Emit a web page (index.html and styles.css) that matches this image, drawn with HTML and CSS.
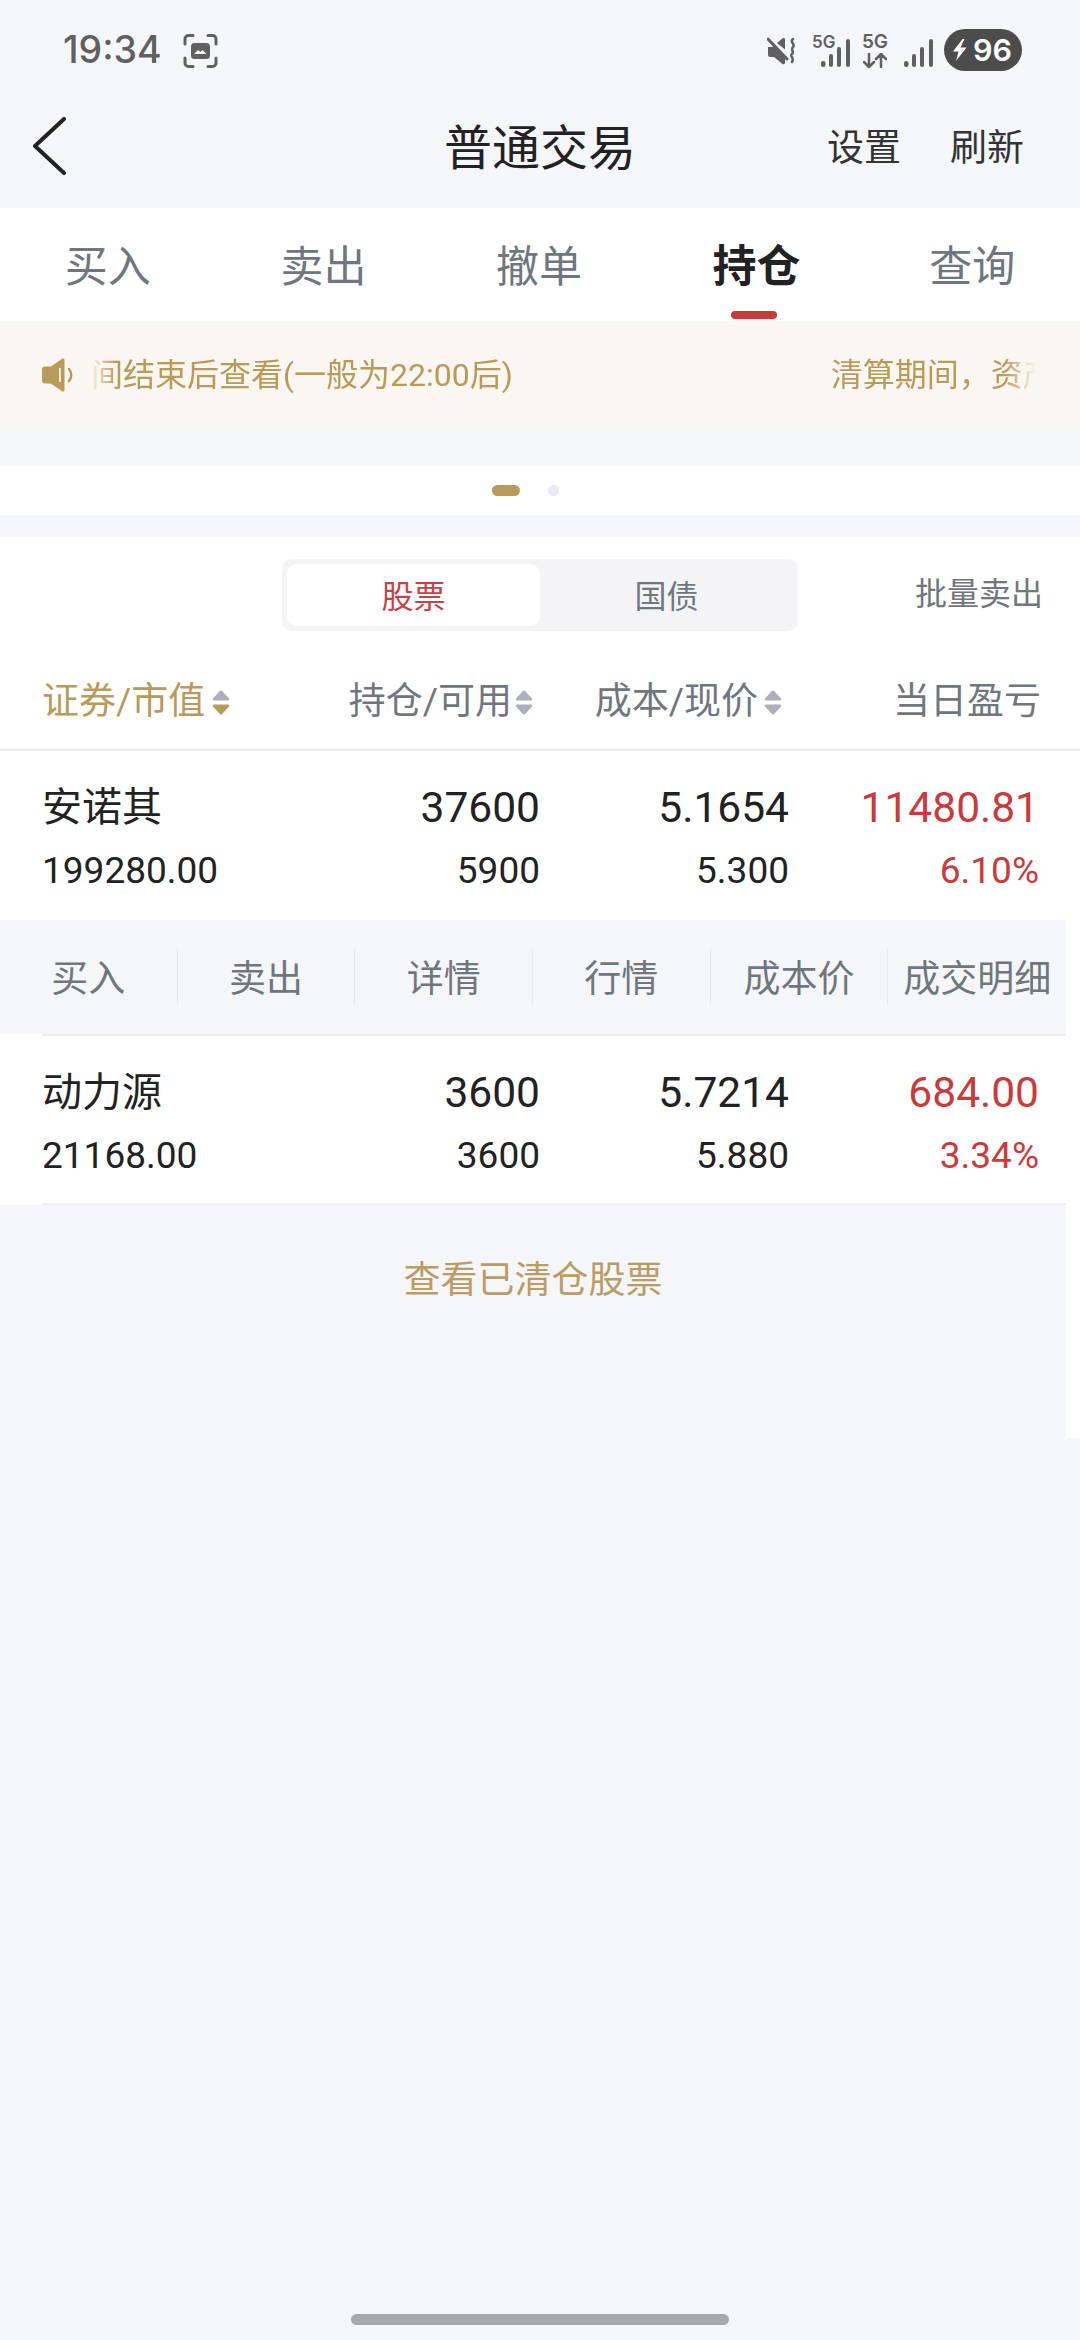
FILE: index.html
```html
<!DOCTYPE html>
<html lang="zh-CN">
<head>
<meta charset="utf-8">
<title>普通交易</title>
<link rel="stylesheet" href="styles.css">
</head>
<body>
<div class="page">
  <div class="status">
    <div class="status-left">
      <span class="time">19:34</span>
      <svg class="shot" width="35" height="34" viewBox="0 0 35 34" fill="none" stroke="#606060" stroke-width="3" stroke-linecap="round"><path d="M2 10V5a3.500 3.500 0 0 1 3.500-3.500H10M25 1.500h4.500A3.500 3.500 0 0 1 33 5v5M33 24v5a3.500 3.500 0 0 1-3.500 3.500H25M10 32.500H5.500A3.500 3.500 0 0 1 2 29v-5"/><rect x="8" y="9" width="19" height="16" rx="3.500" fill="#606060" stroke="none"/><path d="M11 20l4-4 2.500 2 2-2 4 4z" fill="#f5f6fa" stroke="none"/></svg>
    </div>
    <div class="status-right">
      <svg class="mute" width="29" height="28" viewBox="0 0 29 28"><path d="M1 10h4l2-1 11 11v6.500l-2 1L7 20H3a2 2 0 0 1-2-2z" fill="#606060"/><path d="M10 6l6-5 2 .5v11z" fill="#606060"/><path d="M1 2l19 20" stroke="#606060" stroke-width="3" stroke-linecap="round"/><path d="M26 2c-4 3 3 5 0 8s2 5-1 7 3 4 0 8" fill="none" stroke="#606060" stroke-width="2.500" stroke-linecap="round"/></svg>
      <div class="net net-a">
        <span class="net-label">5G</span>
        <svg width="29" height="28" viewBox="0 0 29 28" fill="#606060"><rect x="0" y="22" width="4.500" height="6" rx="2.200"/><rect x="8" y="15" width="4" height="13" rx="2"/><rect x="16" y="8" width="4" height="20" rx="2"/><rect x="25" y="0" width="4" height="28" rx="2"/></svg>
      </div>
      <div class="net-b">
        <span class="net-label net-label-lg">5G</span>
        <svg width="24" height="15" viewBox="0 0 24 15" fill="none" stroke="#606060" stroke-width="2.500" stroke-linecap="round" stroke-linejoin="round"><path d="M6 1v13M1 9l5 5 5-5M18 14V1M13 6l5-5 5 5"/></svg>
      </div>
      <svg class="sig2" width="29" height="28" viewBox="0 0 29 28" fill="#606060"><rect x="0" y="22" width="4.500" height="6" rx="2.200"/><rect x="8" y="15" width="4" height="13" rx="2"/><rect x="16" y="8" width="4" height="20" rx="2"/><rect x="25" y="0" width="4" height="28" rx="2"/></svg>
      <div class="battery">
        <svg width="14" height="22" viewBox="0 0 14 22" fill="#fff"><path d="M9.500 0L0 12.500h5.500L3 22l10.500-13.500H7.500L11.500 0z"/></svg>
        <span class="batt-num">96</span>
      </div>
    </div>
  </div>

  <header class="nav">
    <svg class="back" width="34" height="58" viewBox="0 0 34 58" fill="none" stroke="#222" stroke-width="4" stroke-linecap="round" stroke-linejoin="round"><path d="M32 2L3 29l29 27"/></svg>
    <h1 class="title">普通交易</h1>
    <div class="nav-actions"><span>设置</span><span>刷新</span></div>
  </header>

  <nav class="tabs">
    <span class="tab">买入</span>
    <span class="tab">卖出</span>
    <span class="tab">撤单</span>
    <span class="tab tab-active">持仓</span>
    <span class="tab">查询</span>
  </nav>

  <div class="notice">
    <svg class="speaker" width="31" height="34" viewBox="0 0 31 34"><path d="M3 8.500h6L20 .8c1.500-.8 2.500 0 2.500 1.500v29.400c0 1.500-1 2.300-2.500 1.500L9 25.500H3a3 3 0 0 1-3-3v-11a3 3 0 0 1 3-3z" fill="#b99a59"/><rect x="17" y="10" width="1.800" height="14" fill="#faf6f1"/><path d="M27 11c3 3.500 3 8.500 0 12" fill="none" stroke="#b99a59" stroke-width="2.500" stroke-linecap="round"/></svg>
    <div class="marquee">
      <div class="marquee-track">
        <span>间结束后查看(一般为22:00后)</span>
        <span>清算期间，资产数据可能不准确</span>
      </div>
    </div>
  </div>

  <div class="gap-notice"></div>
  <div class="pager"><i class="dot dot-on"></i><i class="dot"></i></div>
  <div class="gap-pager"></div>

  <section class="panel">
    <div class="seg-row">
      <div class="seg">
        <span class="seg-item seg-on">股票</span>
        <span class="seg-item">国债</span>
      </div>
      <span class="batch">批量卖出</span>
    </div>

    <div class="thead">
      <div class="th th-gold"><span>证券/市值</span>
        <svg class="sort" width="18" height="25" viewBox="0 0 18 25"><path d="M9 .5c.6 0 1 .3 1.400.7L17 8.500c.6.800.2 2-1 2H2c-1.200 0-1.600-1.200-1-2l6.600-7.300C8 .8 8.400.5 9 .5z" fill="#adb0b9"/><path d="M9 24.500c.6 0 1-.3 1.400-.7L17 16.500c.6-.8.200-2-1-2H2c-1.200 0-1.600 1.200-1 2l6.600 7.300c.4.400.8.700 1.400.7z" fill="#b99a59"/></svg>
      </div>
      <div class="th th-r th-tight"><span>持仓/可用</span>
        <svg class="sort" width="18" height="25" viewBox="0 0 18 25" fill="#adb0b9"><path d="M9 .5c.6 0 1 .3 1.400.7L17 8.500c.6.800.2 2-1 2H2c-1.200 0-1.600-1.200-1-2l6.600-7.300C8 .8 8.400.5 9 .5z"/><path d="M9 24.500c.6 0 1-.3 1.400-.7L17 16.500c.6-.8.200-2-1-2H2c-1.200 0-1.600 1.200-1 2l6.600 7.300c.4.400.8.700 1.400.7z"/></svg>
      </div>
      <div class="th th-r"><span>成本/现价</span>
        <svg class="sort" width="18" height="25" viewBox="0 0 18 25" fill="#adb0b9"><path d="M9 .5c.6 0 1 .3 1.400.7L17 8.500c.6.800.2 2-1 2H2c-1.200 0-1.600-1.200-1-2l6.600-7.300C8 .8 8.400.5 9 .5z"/><path d="M9 24.500c.6 0 1-.3 1.400-.7L17 16.500c.6-.8.200-2-1-2H2c-1.200 0-1.600 1.200-1 2l6.600 7.300c.4.400.8.700 1.400.7z"/></svg>
      </div>
      <div class="th th-end"><span>当日盈亏</span></div>
    </div>

    <div class="row">
      <span class="name">安诺其</span><span class="big">37600</span><span class="big">5.1654</span><span class="big red">11480.81</span>
      <span class="small left">199280.00</span><span class="small">5900</span><span class="small">5.300</span><span class="small red">6.10%</span>
    </div>

    <div class="lower">
      <div class="actions">
        <span class="act">买入</span><span class="act">卖出</span><span class="act">详情</span><span class="act">行情</span><span class="act">成本价</span><span class="act">成交明细</span>
      </div>
      <div class="row-wrap">
        <div class="row row-inset">
          <span class="name">动力源</span><span class="big">3600</span><span class="big">5.7214</span><span class="big red">684.00</span>
          <span class="small left">21168.00</span><span class="small">3600</span><span class="small">5.880</span><span class="small red">3.34%</span>
        </div>
      </div>
      <div class="more">查看已清仓股票</div>
    </div>
  </section>

  <div class="home-bar"></div>
</div>
</body>
</html>
```

FILE: styles.css
```css
* { box-sizing: border-box; }
html, body { margin: 0; padding: 0; }
body {
  width: 1080px;
  height: 2340px;
  overflow: hidden;
  background: #f5f6fa;
  font-family: Roboto, "Noto Sans CJK SC", sans-serif;
  color: #222;
}
.page {
  position: relative;
  width: 1080px;
  height: 2340px;
  display: flex;
  flex-direction: column;
  background: #f5f6fa;
}

/* status bar */
.status {
  height: 100px;
  padding: 29px 58px 0 63px;
  display: flex;
  justify-content: space-between;
  align-items: flex-start;
  flex: none;
}
.status-left { display: flex; align-items: center; gap: 21px; height: 42px; }
.time {
  font-family: Inter, sans-serif;
  font-weight: 500;
  font-size: 37.5px;
  line-height: 42px;
  color: #606060;
}
.shot { margin-top: 1px; }
.status-right { display: flex; align-items: flex-start; height: 42px; }
.mute { margin: 8px 0 0 0; }
.net { position: relative; width: 38px; height: 42px; margin-left: 16px; display: flex; justify-content: flex-end; }
.net svg { margin-top: 10px; }
.net-label {
  font-family: Inter, sans-serif;
  font-weight: 600;
  font-size: 17px;
  line-height: 14px;
  color: #606060;
}
.net-label-lg { font-size: 19px; }
.net-a .net-label { position: absolute; left: 0; top: 6px; }
.net-b { width: 24px; margin-left: 13px; display: flex; flex-direction: column; align-items: center; padding-top: 6px; gap: 4px; }
.sig2 { margin: 10px 0 0 17px; }
.battery {
  width: 78px;
  height: 42px;
  margin-left: 11px;
  border-radius: 21px;
  background: #4c4c4c;
  display: flex;
  align-items: center;
  padding-left: 9px;
  gap: 6px;
}
.batt-num {
  font-family: Inter, sans-serif;
  font-weight: 600;
  font-size: 30.5px;
  line-height: 42px;
  color: #fff;
}

/* nav */
.nav {
  height: 108px;
  flex: none;
  position: relative;
  display: flex;
  align-items: center;
  justify-content: center;
  padding-bottom: 10px;
}
.back { position: absolute; left: 32px; top: 17px; }
.title { margin: 0; font-size: 48px; font-weight: 400; line-height: 60px; color: #222; }
.nav-actions {
  position: absolute;
  right: 56px;
  top: 24px;
  display: flex;
  gap: 49px;
  font-size: 37px;
  line-height: 50px;
  color: #333;
}

/* tabs */
.tabs { height: 113px; flex: none; display: flex; background: #fff; }
.tab {
  position: relative;
  flex: 1;
  display: flex;
  justify-content: center;
  padding-top: 29px;
  font-size: 43px;
  line-height: 60px;
  color: #70767e;
}
.tab-active { color: #222; font-weight: 700; font-size: 44px; padding-left: 2px; }
.tab-active::after {
  content: "";
  position: absolute;
  left: 84px;
  bottom: 2px;
  width: 46px;
  height: 8px;
  border-radius: 4px;
  background: #ca3a3a;
}

/* notice */
.notice {
  height: 108px;
  flex: none;
  background: #faf6f1;
  display: flex;
  align-items: center;
  padding-left: 42px;
}
.speaker { flex: none; }
.marquee {
  width: 946px;
  margin-left: 17px;
  overflow: hidden;
  -webkit-mask-image: linear-gradient(90deg, transparent 0, #000 26px, #000 915px, transparent 946px);
  mask-image: linear-gradient(90deg, transparent 0, #000 26px, #000 915px, transparent 946px);
}
.marquee-track {
  display: flex;
  gap: 318px;
  white-space: nowrap;
  font-size: 32px;
  line-height: 46px;
  color: #b99a59;
  margin-left: 1px;
}

.gap-notice { height: 37px; flex: none; background: #f6f7f8; }
.pager {
  height: 49px;
  flex: none;
  background: #fff;
  display: flex;
  align-items: center;
  padding-left: 492px;
  gap: 28px;
}
.dot { display: block; width: 11px; height: 11px; border-radius: 50%; background: #e9ebf0; }
.dot-on { width: 28px; border-radius: 6px; background: #b99a59; }
.gap-pager { height: 22px; flex: none; }

/* panel */
.panel {
  height: 901px;
  flex: none;
  background: #fff;
  display: flex;
  flex-direction: column;
}
.seg-row {
  height: 116px;
  flex: none;
  padding: 22px 37px 0 282px;
  display: flex;
  justify-content: space-between;
  align-items: flex-start;
}
.seg {
  width: 516px;
  height: 72px;
  padding: 5px;
  border-radius: 10px;
  background: #f4f4f6;
  display: flex;
}
.seg-item {
  flex: 1;
  display: flex;
  align-items: center;
  justify-content: center;
  border-radius: 10px;
  padding-bottom: 2px;
  font-size: 32px;
  color: #70767e;
}
.seg-on { background: #fff; color: #c8414a; }
.batch { font-size: 32px; line-height: 70px; color: #70767e; }

.thead {
  height: 98px;
  flex: none;
  display: grid;
  grid-template-columns: 258px 240px 249px 252px;
  padding: 0 0 0 42px;
  align-items: center;
  border-bottom: 2px solid #eeeef0;
  font-size: 37px;
  color: #70767e;
}
.th { display: flex; align-items: center; gap: 6px; line-height: 50px; padding-top: 2px; }
.th-gold { color: #b99a59; gap: 7px; }
.th-r { justify-content: flex-end; padding-right: 7px; }
.th-tight { gap: 3px; }
.th-end { justify-content: flex-end; }

.row {
  height: 169px;
  flex: none;
  display: grid;
  grid-template-columns: 258px 240px 249px 250px;
  grid-template-rows: 50px 50px;
  row-gap: 13px;
  padding: 32px 0 0 42px;
  background: #fff;
  text-align: right;
}
.name { font-size: 40px; line-height: 50px; text-align: left; color: #222; }
.big { font-size: 42.5px; line-height: 50px; color: #222; }
.small { font-size: 37px; line-height: 50px; color: #222; }
.left { text-align: left; }
.big.red, .small.red { color: #ca3a3a; }

.lower {
  width: 1066px;
  flex: 1;
  background: #f5f6fa;
  display: flex;
  flex-direction: column;
}
.actions {
  height: 114px;
  flex: none;
  display: grid;
  grid-template-columns: repeat(6, 1fr);
  padding: 28px 0;
}
.act {
  font-size: 37px;
  line-height: 64px;
  height: 57px;
  text-align: center;
  color: #70767e;
  border-right: 1px solid #e9eaee;
}
.act:last-child { border-right: none; }
.row-wrap { background: #fff; height: 171px; flex: none; }
.row-inset {
  height: 171px;
  margin-left: 42px;
  padding: 32px 0 0 0;
  border-top: 2px solid #eeeef0;
  border-bottom: 2px solid #eeeef0;
}
.more {
  padding-top: 50px;
  text-align: center;
  font-size: 37px;
  line-height: 52px;
  color: #bb9d63;
}

.home-bar {
  position: absolute;
  left: 351px;
  top: 2314px;
  width: 378px;
  height: 11px;
  border-radius: 6px;
  background: #a8a9ac;
}
```
